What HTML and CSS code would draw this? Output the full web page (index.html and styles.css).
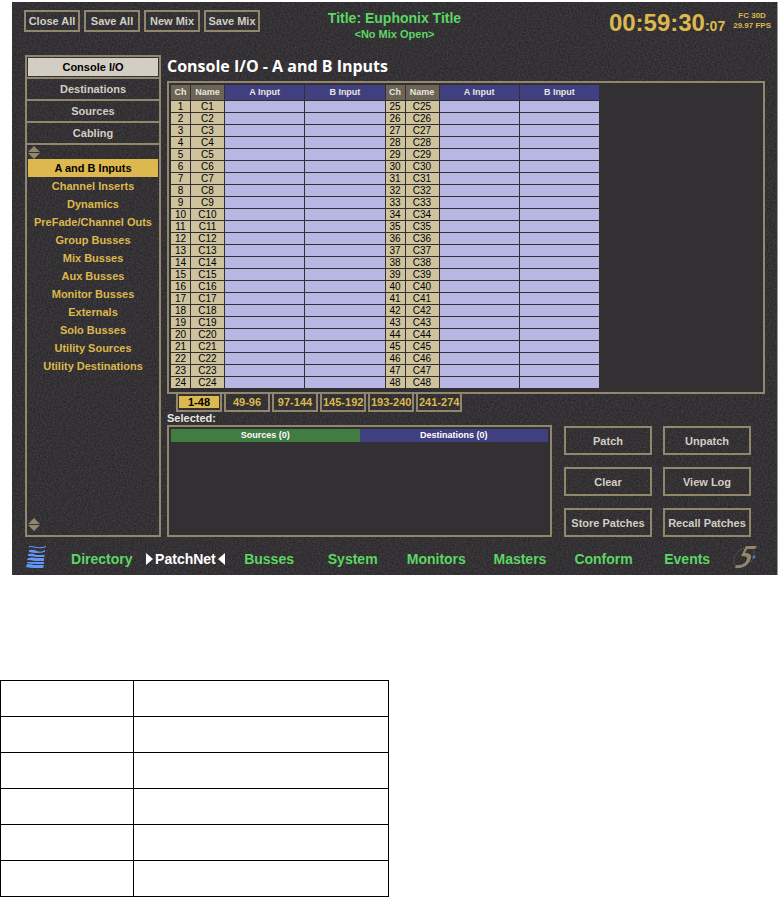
FILE: index.html
```html
<!DOCTYPE html>
<html lang="en">
<head>
    <meta charset="UTF-8">
    <meta name="viewport" content="width=device-width, initial-scale=1.0">
    <title>Console I/O - PatchNet</title>
    <link rel="stylesheet" href="styles.css">
</head>
<body>

    <div class="console">
        <svg class="grain" aria-hidden="true">
            <filter id="grain" x="0" y="0" width="100%" height="100%" color-interpolation-filters="sRGB">
                <feTurbulence type="fractalNoise" baseFrequency="0.6" numOctaves="2" seed="3"/>
                <feColorMatrix type="matrix" values="0.15 0 0 0 0.13  0.15 0 0 0 0.12  0.15 0 0 0 0.13  0 0 0 0 1"/>
            </filter>
            <rect width="100%" height="100%" filter="url(#grain)"/>
        </svg>

        <header class="top-bar">
            <div class="file-buttons">
                <button type="button" class="btn">Close All</button>
                <button type="button" class="btn">Save All</button>
                <button type="button" class="btn">New Mix</button>
                <button type="button" class="btn">Save Mix</button>
            </div>
            <div class="title">
                <div class="title-name">Title: Euphonix Title</div>
                <div class="title-mix">&lt;No Mix Open&gt;</div>
            </div>
            <div class="clock">
                <div class="time">00:59:30<span class="frames">:07</span></div>
                <div class="rate">FC 30D<br>29.97 FPS</div>
            </div>
        </header>

        <div class="content">
            <aside class="sidebar">
                <button type="button" class="section active"><span>Console I/O</span></button>
                <button type="button" class="section"><span>Destinations</span></button>
                <button type="button" class="section"><span>Sources</span></button>
                <button type="button" class="section"><span>Cabling</span></button>
                <div class="page-list">
                    <button type="button" class="scroll" aria-label="Scroll up">
                        <svg width="12" height="13" viewBox="0 0 12 13"><path d="M6 0L12 6H0zM0 7H12L6 13z" fill="#90876c"/></svg>
                    </button>
                    <button type="button" class="page active">A and B Inputs</button>
                    <button type="button" class="page">Channel Inserts</button>
                    <button type="button" class="page">Dynamics</button>
                    <button type="button" class="page">PreFade/Channel Outs</button>
                    <button type="button" class="page">Group Busses</button>
                    <button type="button" class="page">Mix Busses</button>
                    <button type="button" class="page">Aux Busses</button>
                    <button type="button" class="page">Monitor Busses</button>
                    <button type="button" class="page">Externals</button>
                    <button type="button" class="page">Solo Busses</button>
                    <button type="button" class="page">Utility Sources</button>
                    <button type="button" class="page">Utility Destinations</button>
                    <button type="button" class="scroll scroll-end" aria-label="Scroll down">
                        <svg width="12" height="13" viewBox="0 0 12 13"><path d="M6 0L12 6H0zM0 7H12L6 13z" fill="#90876c"/></svg>
                    </button>
                </div>
            </aside>

            <main class="main">
                <h1>Console I/O - A and B Inputs</h1>
                <div class="panel">
                    <table class="channels">
                        <colgroup>
                            <col class="col-ch"><col class="col-name"><col class="col-input"><col class="col-input">
                            <col class="col-ch"><col class="col-name"><col class="col-input"><col class="col-input">
                        </colgroup>
                        <thead>
                            <tr>
                                <th>Ch</th>
                                <th>Name</th>
                                <th class="input">A Input</th>
                                <th class="input">B Input</th>
                                <th>Ch</th>
                                <th>Name</th>
                                <th class="input">A Input</th>
                                <th class="input">B Input</th>
                            </tr>
                        </thead>
                        <tbody id="channelRows"></tbody>
                    </table>
                </div>

                <div class="tabs">
                    <button type="button" class="tab active"><span>1-48</span></button>
                    <button type="button" class="tab"><span>49-96</span></button>
                    <button type="button" class="tab"><span>97-144</span></button>
                    <button type="button" class="tab"><span>145-192</span></button>
                    <button type="button" class="tab"><span>193-240</span></button>
                    <button type="button" class="tab"><span>241-274</span></button>
                </div>

                <h2>Selected:</h2>
                <div class="bottom">
                    <div class="panel selected">
                        <div class="sources">Sources (0)</div>
                        <div class="destinations">Destinations (0)</div>
                    </div>
                    <div class="actions">
                        <button type="button" class="btn">Patch</button>
                        <button type="button" class="btn">Unpatch</button>
                        <button type="button" class="btn">Clear</button>
                        <button type="button" class="btn">View Log</button>
                        <button type="button" class="btn">Store Patches</button>
                        <button type="button" class="btn">Recall Patches</button>
                    </div>
                </div>
            </main>
        </div>

        <footer class="bottom-bar">
            <svg width="20" height="22" viewBox="0 0 20 22">
                <g fill="#6496fa">
                    <path d="M3 0Q7 0 11 1T20 0V1Q16 3 11 2T3 1z"/>
                    <path d="M3 4Q7 3 11 5T19 4V6Q15 7 11 7T3 6z"/>
                    <path d="M2 8Q7 7 10 9H19L18 11H10Q7 10 2 10z"/>
                    <path d="M2 12Q6 11 9 12H18V15H9Q6 14 1 14z"/>
                    <path d="M1 16H18V18H9Q5 18 1 17z"/>
                    <path d="M1 18Q5 18 8 19H18L17 22H8Q4 22 0 21z"/>
                </g>
            </svg>
            <nav>
                <a href="#">Directory</a>
                <a href="#" class="active">
                    <svg width="7" height="12" viewBox="0 0 7 12"><path d="M0 0L7 6L0 12z" fill="#fff"/></svg>
                    PatchNet
                    <svg width="7" height="12" viewBox="0 0 7 12"><path d="M7 0L0 6L7 12z" fill="#fff"/></svg>
                </a>
                <a href="#">Busses</a>
                <a href="#">System</a>
                <a href="#">Monitors</a>
                <a href="#">Masters</a>
                <a href="#">Conform</a>
                <a href="#">Events</a>
            </nav>
            <svg width="24" height="22" viewBox="0 0 24 22">
                <path d="M11 2Q4 5 1 12Q0 17 3 20M20 4Q22 6 21 9Q20 14 17 17" fill="none" stroke="#8c6848" stroke-dasharray="1 1"/>
                <path d="M13 0H24L22 3H14L12 7Q19 7 18 12Q16 20 7 22H2L3 19Q12 20 14 13Q15 10 8 10z" fill="#90876c"/>
                <circle cx="21" cy="11" r="1.5" fill="#3c82dc"/>
            </svg>
        </footer>
    </div>

    <table class="notes">
        <tbody>
            <tr><td></td><td></td></tr>
            <tr><td></td><td></td></tr>
            <tr><td></td><td></td></tr>
            <tr><td></td><td></td></tr>
            <tr><td></td><td></td></tr>
            <tr><td></td><td></td></tr>
        </tbody>
    </table>

    <script>
        const rowCount = 24;
        const channelRows = document.getElementById('channelRows');

        // each row holds two channels: n and n + 24
        for (let n = 1; n <= rowCount; n++) {
            const row = document.createElement('tr');
            row.innerHTML = [n, n + rowCount].map(ch => `
                <td>${ch}</td>
                <td>C${ch}</td>
                <td class="input"></td>
                <td class="input"></td>
            `).join('');
            channelRows.appendChild(row);
        }
    </script>

</body>
</html>
```
FILE: styles.css
```css
* {
    box-sizing: border-box;
}
body {
    margin: 0;
    background-color: #fff;
    font-family: "Liberation Sans", Arial, sans-serif;
    font-size: 11px;
    font-weight: bold;
}
button {
    margin: 0;
    padding: 0;
    border: none;
    background: none;
    font: inherit;
    color: inherit;
    white-space: nowrap;
    cursor: pointer;
}
svg {
    display: block;
}
.console {
    position: relative;
    margin: 2px 6px 0 12px;
    border-right: 1px solid #999;
    background-color: #333133;
    color: #d2cec4;
}
.grain {
    position: absolute;
    top: 0;
    left: 0;
    width: 100%;
    height: 100%;
}
.top-bar, .content, .bottom-bar {
    position: relative;
}
.btn {
    border: 2px solid #90876c;
}

/* top bar */
.top-bar {
    display: grid;
    grid-template-columns: 1fr auto 1fr;
    height: 53px;
    padding: 8px 6px 0;
}
.file-buttons {
    display: flex;
    gap: 4px;
    margin-left: 6px;
}
.file-buttons .btn {
    width: 56px;
    height: 22px;
}
.title {
    text-align: center;
    line-height: 16px;
    color: #5cd664;
}
.title-name {
    font-size: 14px;
}
.clock {
    display: flex;
    justify-content: flex-end;
    gap: 8px;
    color: #dcb84e;
}
.time {
    font-size: 24px;
    line-height: 26px;
}
.frames {
    font-size: 14px;
}
.rate {
    padding-top: 1px;
    font-size: 8px;
    line-height: 10px;
    text-align: center;
}

/* sidebar */
.content {
    display: flex;
    gap: 6px;
    padding: 0 12px 0 13px;
}
.sidebar {
    display: flex;
    flex-direction: column;
    width: 136px;
    border: 2px solid #90876c;
}
.section {
    height: 22px;
    padding: 1px;
    border-bottom: 2px solid #90876c;
}
.section span {
    display: block;
    line-height: 18px;
}
.section.active span {
    background-color: #d2cec4;
    color: #000;
}
.page-list {
    display: flex;
    flex-direction: column;
    flex: 1;
    padding: 0 1px 4px;
}
.scroll {
    width: 12px;
    height: 14px;
}
.scroll-end {
    margin-top: auto;
}
.page {
    height: 18px;
    color: #dcb84e;
}
.page.active {
    background-color: #dcb84e;
    color: #000;
}

/* main area */
.main {
    flex: 1;
}
h1 {
    height: 26px;
    margin: 0;
    font-family: "Open Sans", sans-serif;
    font-size: 16px;
    line-height: 22px;
    color: #fff;
}
h2 {
    margin: 0;
    font-size: 11px;
    line-height: 13px;
    color: #e8e6e0;
}
.panel {
    padding: 2px 2px 3px;
    border: 2px solid #90876c;
    background-color: #323032;
}
.channels {
    width: 429px;
    table-layout: fixed;
    border-collapse: separate;
    border-spacing: 0;
    font-size: 10px;
}
.col-ch {
    width: 20px;
}
.col-name {
    width: 34px;
}
.channels th, .channels td {
    height: 12px;
    padding: 0;
    border-right: 1px solid #323032;
    border-bottom: 1px solid #323032;
    line-height: 11px;
    text-align: center;
}
.channels th {
    height: 16px;
    font-size: 9px;
    background-color: #6c6454;
    color: #e8e6e0;
}
.channels td {
    font-weight: normal;
    background-color: #cfc39d;
    color: #000;
}
.channels th.input {
    background-color: #403f80;
}
.channels td.input {
    background-color: #b8b6e2;
}
.tabs {
    display: flex;
    gap: 2px;
    padding-left: 9px;
}
.tab {
    width: 46px;
    height: 18px;
    padding: 2px 1px;
    border: 2px solid #90876c;
    border-top: none;
    color: #dcb84e;
}
.tab span {
    display: block;
    line-height: 12px;
}
.tab.active span {
    background-color: #dcb84e;
    color: #000;
}
.bottom {
    display: flex;
    gap: 12px;
    padding-right: 14px;
}
.selected {
    display: flex;
    flex: 1;
    height: 112px;
    font-size: 9px;
    line-height: 13px;
    text-align: center;
    color: #fff;
}
.sources, .destinations {
    flex: 1;
    height: 13px;
}
.sources {
    background-color: #417c42;
}
.destinations {
    background-color: #403f80;
}
.actions {
    display: grid;
    grid-template-columns: 88px 88px;
    grid-auto-rows: 29px;
    gap: 12px 11px;
    padding-top: 1px;
}

/* bottom bar */
.bottom-bar {
    display: flex;
    align-items: center;
    height: 38px;
    padding: 2px 20px 0 14px;
}
nav {
    display: grid;
    grid-template-columns: repeat(8, 1fr);
    flex: 1;
    margin: 4px 4px 0 14px;
}
nav a {
    display: flex;
    align-items: center;
    justify-content: center;
    gap: 2px;
    font-size: 14px;
    line-height: 16px;
    color: #5cd664;
    text-decoration: none;
}
nav a.active {
    color: #fff;
}

/* empty notes table */
.notes {
    width: 389px;
    margin-top: 105px;
    table-layout: fixed;
    border-collapse: collapse;
}
.notes td {
    height: 36px;
    padding: 0;
    border: 1px solid #000;
}
.notes td:first-child {
    width: 133px;
}
```
